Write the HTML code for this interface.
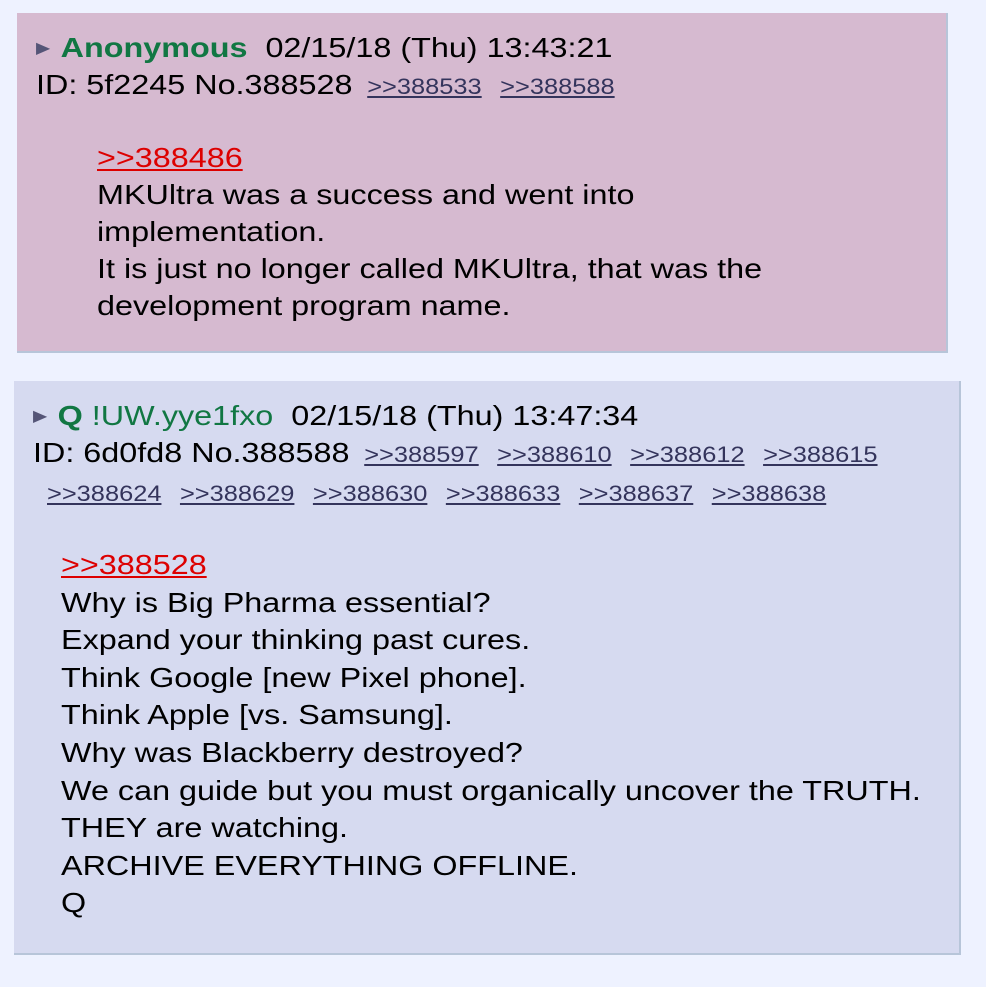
<html><head><style>
body{margin:0;width:986px;height:987px;background:#eef2ff;font-family:"Liberation Sans",sans-serif;color:#000;position:relative;overflow:hidden}
.box{position:absolute;border-right:2px solid #b7c5d9;border-bottom:2px solid #b7c5d9}
.l{position:absolute;white-space:nowrap;font-size:28px;line-height:37px;transform:scaleX(1.155);transform-origin:0 0}
.s{font-size:22px;color:#34345c;text-decoration:underline;margin-right:16px}
.f{margin-left:5px}
.n{color:#117743;font-weight:bold}
.t{color:#117743}
.tri{font-size:16px;color:#555577;vertical-align:4px;margin-right:9px}
.q{color:#d00;text-decoration:underline}
</style></head><body>
<div class="box" style="left:17px;top:13px;width:929px;height:338px;background:#d6bad0"></div>
<div class="l" style="left:36px;top:29px"><span class="tri">▶</span><span class="n">Anonymous</span>&nbsp; 02/15/18 (Thu) 13:43:21</div>
<div class="l" style="left:36px;top:66px">ID: 5f2245 No.388528 <span class="s f">&gt;&gt;388533</span><span class="s">&gt;&gt;388588</span></div>
<div class="l" style="left:97px;top:139px"><span class="q">&gt;&gt;388486</span><br>MKUltra was a success and went into<br>implementation.<br>It is just no longer called MKUltra, that was the<br>development program name.</div>

<div class="box" style="left:14px;top:381px;width:945px;height:572px;background:#d6daf0"></div>
<div class="l" style="left:33px;top:397px"><span class="tri">▶</span><span class="n">Q</span> <span class="t">!UW.yye1fxo</span>&nbsp; 02/15/18 (Thu) 13:47:34</div>
<div class="l" style="left:33px;top:434px">ID: 6d0fd8 No.388588 <span class="s f">&gt;&gt;388597</span><span class="s">&gt;&gt;388610</span><span class="s">&gt;&gt;388612</span><span class="s">&gt;&gt;388615</span></div>
<div class="l" style="left:47px;top:475px;line-height:37px"><span class="s">&gt;&gt;388624</span><span class="s">&gt;&gt;388629</span><span class="s">&gt;&gt;388630</span><span class="s">&gt;&gt;388633</span><span class="s">&gt;&gt;388637</span><span class="s">&gt;&gt;388638</span></div>
<div class="l" style="left:61px;top:546px;line-height:37.6px"><span class="q">&gt;&gt;388528</span><br>Why is Big Pharma essential?<br>Expand your thinking past cures.<br>Think Google [new Pixel phone].<br>Think Apple [vs. Samsung].<br>Why was Blackberry destroyed?<br>We can guide but you must organically uncover the TRUTH.<br>THEY are watching.<br>ARCHIVE EVERYTHING OFFLINE.<br>Q</div>
</body></html>
